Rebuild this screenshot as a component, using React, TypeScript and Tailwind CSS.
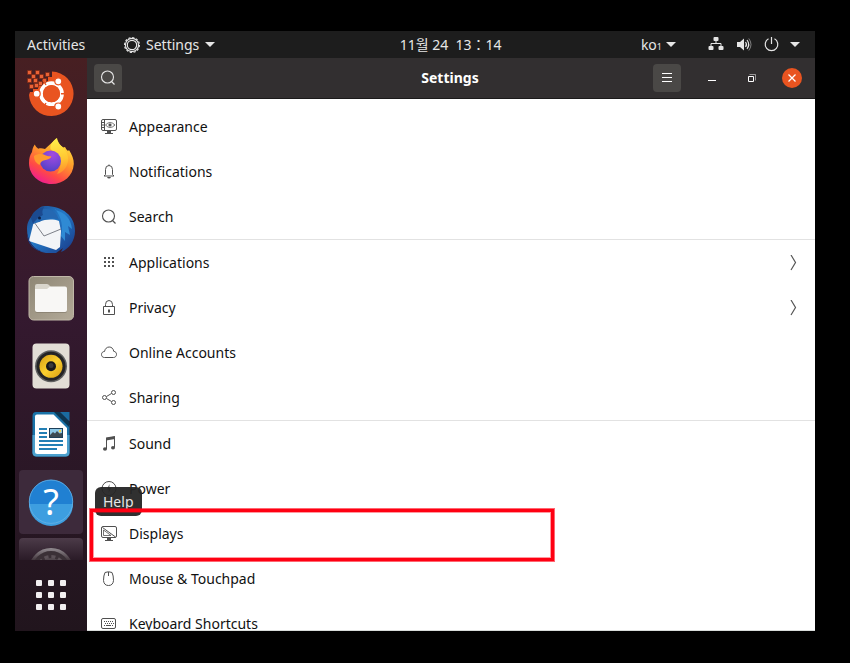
import type { ReactNode } from "react";

const sections = [
    [
        { label: 'Appearance', icon: <AppearanceIcon /> },
        { label: 'Notifications', icon: <BellIcon /> },
        { label: 'Search', icon: <SearchIcon /> },
    ],
    [
        { label: 'Applications', icon: <AppsIcon />, arrow: true },
        { label: 'Privacy', icon: <LockIcon />, arrow: true },
        { label: 'Online Accounts', icon: <CloudIcon /> },
        { label: 'Sharing', icon: <ShareIcon /> },
    ],
    [
        { label: 'Sound', icon: <MusicIcon /> },
        { label: 'Power', icon: <PowerRowIcon /> },
        { label: 'Displays', icon: <DisplayIcon />, marked: true },
        { label: 'Mouse & Touchpad', icon: <MouseIcon /> },
        { label: 'Keyboard Shortcuts', icon: <KeyboardIcon /> },
    ],
] as { label: string; icon: ReactNode; arrow?: boolean; marked?: boolean }[][];

const dockApps = [
    { label: 'Install Ubuntu', icon: <UbuntuLogo /> },
    { label: 'Firefox', icon: <FirefoxLogo /> },
    { label: 'Thunderbird', icon: <ThunderbirdLogo /> },
    { label: 'Files', icon: <FilesLogo /> },
    { label: 'Rhythmbox', icon: <RhythmboxLogo /> },
    { label: 'LibreOffice Writer', icon: <WriterLogo /> },
];

export default function App() {
    return (
        <div className="h-screen bg-black pt-[31px] pr-[35px] pb-8 pl-[15px] font-['Noto_Sans','Noto_Sans_CJK_KR',sans-serif] text-sm">
            <div className="flex h-full flex-col">
                <TopBar />
                <div className="flex min-h-0 flex-1">
                    <Dock />
                    <main className="flex min-w-0 flex-1 flex-col">
                        <HeaderBar />
                        <SettingsList />
                    </main>
                </div>
            </div>
        </div>
    );
}

function TopBar() {
    return (
        <header className="flex h-[27px] shrink-0 items-center bg-[#1d1d1d] pr-[15px] text-[#e6e6e6]">
            <div className="flex basis-[49%] items-center pl-3">
                <button className="w-[97px] text-left">Activities</button>
                <button className="flex items-center">
                    <GearIcon />
                    <span className="ml-1.5 mr-1.5">Settings</span>
                    <Caret />
                </button>
            </div>
            <button className="whitespace-pre">11월 24  13：14</button>
            <div className="ml-auto flex items-center">
                <button className="mr-8 flex items-center gap-1">
                    <span>ko<span className="text-[9px]">1</span></span>
                    <Caret />
                </button>
                <button className="flex items-center" aria-label="System menu">
                    <NetworkIcon />
                    <span className="mx-3"><VolumeIcon /></span>
                    <PowerIcon />
                    <span className="ml-2.5"><Caret /></span>
                </button>
            </div>
        </header>
    );
}

function HeaderBar() {
    return (
        <div className="grid h-[41px] shrink-0 grid-cols-[1fr_auto_1fr] items-center border-b border-[#1b1a1a] bg-[#322f30] pr-[13px] pl-[7px] text-white">
            <button aria-label="Search" className="flex size-7 items-center justify-center rounded-sm bg-[#4a4846] text-[#e6e6e6]">
                <SearchIcon />
            </button>
            <h1 className="pl-1 font-bold">Settings</h1>
            <div className="flex items-center justify-end">
                <button aria-label="Menu" className="mr-[21px] flex size-7 items-center justify-center rounded-sm bg-[#4a4846]">
                    <svg width="16" height="16" viewBox="0 0 16 16" stroke="currentColor">
                        <path d="M3 3.5h10M3 7.5h10M3 11.5h10" />
                    </svg>
                </button>
                <button aria-label="Minimize" className="mr-[22px]">
                    <svg width="20" height="20" viewBox="0 0 20 20" stroke="currentColor">
                        <path d="M6 12.5h8" />
                    </svg>
                </button>
                <button aria-label="Restore" className="mr-[22px]">
                    <svg width="16" height="16" viewBox="0 0 16 16" fill="none" stroke="currentColor">
                        <path d="M5.5 4.5h6v6" opacity=".5" />
                        <path d="M4.5 6.5h5v5h-5z" />
                    </svg>
                </button>
                <button aria-label="Close" className="flex size-5 items-center justify-center rounded-full bg-[#e95420]">
                    <svg width="10" height="10" viewBox="0 0 10 10" stroke="currentColor" strokeWidth="1.3">
                        <path d="M1.5 1.5l7 7M8.5 1.5l-7 7" />
                    </svg>
                </button>
            </div>
        </div>
    );
}

function SettingsList() {
    return (
        <nav className="min-h-0 flex-1 overflow-hidden border-b border-[#d8dcda] bg-white pt-[5px] text-[#111]">
            {
                sections.map((rows, index) =>
                    <ul key={index} className="border-b border-[#e2e2e2] last:border-b-0">
                        {
                            rows.map((row) =>
                                <li key={row.label} className="relative">
                                    <a href="#" className="flex h-[45px] items-center px-[14px]">
                                        <span className="text-[#505050]">{row.icon}</span>
                                        <span className="ml-3 flex-1">{row.label}</span>
                                        {row.arrow && <Chevron />}
                                    </a>
                                    {row.marked && <MarkFrame />}
                                </li>
                            )
                        }
                    </ul>
                )
            }
        </nav>
    );
}

function MarkFrame() {
    return (
        <div className="pointer-events-none absolute -top-0.5 left-[3px] z-20 h-[52px] w-[464px] border-[3px] border-[#ff0012] shadow-[0_0_0_1px_#ff001299,inset_0_0_0_1px_#ff001266]" />
    );
}

function Dock() {
    return (
        <aside className="flex w-[72px] shrink-0 flex-col bg-linear-to-b from-[#471f22] via-[#34192f] via-45% to-[#21151d]">
            <div className="flex min-h-0 flex-1 flex-col items-center gap-1 pt-1">
                {
                    dockApps.map((app) =>
                        <button key={app.label} aria-label={app.label} className="size-16 shrink-0">{app.icon}</button>
                    )
                }
                <div className="relative size-16 shrink-0">
                    <button aria-label="Help" className="size-16 rounded-sm bg-[#3d2a3b]">
                        <HelpLogo />
                    </button>
                    <span role="tooltip" className="absolute top-[17px] left-[76px] z-10 rounded-md bg-[#252525]/95 px-2 py-1 leading-[21px] text-[#e6e6e6]">Help</span>
                </div>
                <button aria-label="Settings" className="flex min-h-0 w-16 flex-1 items-start overflow-hidden rounded-t-sm bg-linear-to-b from-[#4c3b49] to-[#2a1b27]">
                    <SettingsLogo />
                </button>
            </div>
            <button aria-label="Show Applications" className="flex h-[71px] shrink-0 items-center justify-center pb-0.5">
                <span className="grid grid-cols-3 gap-1.5">
                    {
                        [0, 1, 2, 3, 4, 5, 6, 7, 8].map((dot) =>
                            <span key={dot} className="size-1.5 rounded-[1px] bg-[#f2eff0]" />
                        )
                    }
                </span>
            </button>
        </aside>
    );
}

/* ---- dock logos ---- */

function Logo(props: { children: ReactNode }) {
    return <svg width="64" height="64" viewBox="0 0 64 64" className="shrink-0">{props.children}</svg>;
}

function UbuntuLogo() {
    const pixels = [[9, 9], [17, 9], [13, 13], [21, 13], [27, 11], [9, 17], [15, 17], [20, 20], [24, 17], [11, 23], [16, 22]];
    return (
        <Logo>
            <path d="M33 9.500A22.300 22.300 0 1 1 10 33l1-3h3v-3h5v-4h5v-4h5v-4h4z" fill="#e95420" />
            {pixels.map(([x, y]) =>
                <rect key={x + '-' + y} x={x - 0.5} y={y - 0.5} width="4" height="4" fill="#ea6236" stroke="#7a2816" strokeWidth=".7" />
            )}
            <circle cx="32.500" cy="31.700" r="10.500" fill="none" stroke="#fff" strokeWidth="3.800" />
            <path d="M42 31.700h5M27 23l-3-5M27 41l-3 5" stroke="#e95420" strokeWidth="1.400" />
            <circle cx="32.500" cy="31.700" r="8.600" fill="#e95420" />
            <g fill="#fff" stroke="#e95420" strokeWidth="1.200">
                <circle cx="39.300" cy="19.300" r="3.500" />
                <circle cx="17.700" cy="31.700" r="3.500" />
                <circle cx="39.300" cy="44.500" r="3.500" />
            </g>
        </Logo>
    );
}

function FirefoxLogo() {
    return (
        <Logo>
            <defs>
                <linearGradient id="ffBody" x1=".85" y1=".1" x2=".35" y2="1">
                    <stop offset="0" stopColor="#ffe63c" />
                    <stop offset=".4" stopColor="#ff9a2b" />
                    <stop offset=".75" stopColor="#ff4a45" />
                    <stop offset="1" stopColor="#f0208c" />
                </linearGradient>
                <linearGradient id="ffFlame" x1=".5" y1="0" x2=".6" y2="1">
                    <stop offset="0" stopColor="#fff04a" />
                    <stop offset=".6" stopColor="#ffc531" />
                    <stop offset="1" stopColor="#ff8a2c" />
                </linearGradient>
                <radialGradient id="ffGlobe" cx=".6" cy=".2" r=".9">
                    <stop offset="0" stopColor="#a44be0" />
                    <stop offset=".6" stopColor="#6f45d2" />
                    <stop offset="1" stopColor="#4a3fbc" />
                </radialGradient>
            </defs>
            <path d="M15.700 14.500c1 2 2 3 3.500 4.200 2.200-.6 4.500-.4 6.800.3C29 16 33 13 37.500 8c1 5 3.500 7 6.500 9.500l2-.5c1 2 2 3 3 4l1-1c3 5 5 9 4.800 14C54 46 45 54 32.500 54S10 45 10 33c0-5 1-8 3-11 .3-3 1.200-5 2.700-7.500z" fill="url(#ffBody)" />
            <path d="M38 8c1 5 3.500 7 6 9.500C49 23 50.500 29 48 35c-2 5-6 8-10 9 3-5 5-10 2-17-2-3-6-6-8.500-8C31 14 34 11 38 8z" fill="url(#ffFlame)" />
            <circle cx="31.500" cy="31" r="10.500" fill="url(#ffGlobe)" />
            <path d="M15 26c4-2.500 8-2.500 12-.5 2 1 4 .5 5.500 1-1 2.500-4 3-7 3.800-2.500.7-4 1.700-5 4.700-3-2-5.500-4-5.500-9z" fill="#ff9b2e" />
        </Logo>
    );
}

function ThunderbirdLogo() {
    return (
        <Logo>
            <defs>
                <linearGradient id="tbBody" x1="0" y1="0" x2="1" y2="1">
                    <stop offset="0" stopColor="#1b4688" />
                    <stop offset=".45" stopColor="#2478c6" />
                    <stop offset="1" stopColor="#193785" />
                </linearGradient>
            </defs>
            <path d="M26 8C44 8 56 18 56 33c0 10-6 18-14 21l2-4-7 5H27C15 53 8 43 8 31c0-7 3-12 8-16 3-4 5-7 10-7z" fill="url(#tbBody)" />
            <path d="M36 12c10 2 16 9 17 19l-4-3 2 9-5-3v9l-4-5c2-10 1-18-6-27z" fill="#2f8ad4" />
            <path d="M15 23l5 1c7-3 14-3 20-1l2 10-1 16-4 3-27-9z" fill="#f3f4f7" />
            <path d="M15 24l10 14 17-7" fill="none" stroke="#7d8089" />
            <path d="M10 42c3 7 8 10 15 12-10-1-17-8-17-18z" fill="#1b3c83" />
            <path d="M14 26c0-8 5-15 13-15 6 0 11 4 13 11-7-3-15-2-20 2z" fill="#2568b2" />
            <path d="M12 20c1-5 6-10 13-11-2 3-2 6-1 8-4 2-8 5-10 9z" fill="#1b4a90" />
            <circle cx="20.500" cy="20" r="1.500" fill="#0c2046" />
        </Logo>
    );
}

function FilesLogo() {
    return (
        <Logo>
            <defs>
                <linearGradient id="filesBg" x1="0" y1="0" x2="1" y2="1">
                    <stop offset="0" stopColor="#8e8675" />
                    <stop offset="1" stopColor="#b3aa98" />
                </linearGradient>
            </defs>
            <rect x="10" y="10.500" width="44.500" height="43.500" rx="4.500" fill="url(#filesBg)" stroke="#c0b8a8" />
            <path d="M16 20q0-2 2-2h10q1.500 0 2.500 1.500l2 2.500H40v14H16z" fill="#d9d5cc" />
            <path d="M16 24h12l3-2.500h15q2 0 2 2V45q0 2-2 2H18q-2 0-2-2z" fill="#7f7767" opacity=".6" />
            <path d="M16 23h12l3-2.500h15q2 0 2 2V44q0 2-2 2H18q-2 0-2-2z" fill="#f8f7f5" />
        </Logo>
    );
}

function RhythmboxLogo() {
    return (
        <Logo>
            <defs>
                <linearGradient id="rbCone" x1="0" y1="0" x2="1" y2="1">
                    <stop offset="0" stopColor="#d69d12" />
                    <stop offset=".5" stopColor="#fbd02f" />
                    <stop offset="1" stopColor="#d69d12" />
                </linearGradient>
            </defs>
            <rect x="13.500" y="9.500" width="37" height="45" rx="4" fill="#e2ded6" />
            <circle cx="32" cy="32.300" r="16" fill="#5f6060" />
            <circle cx="32" cy="32.300" r="14.500" fill="#242426" />
            <circle cx="32" cy="32.300" r="11.500" fill="url(#rbCone)" />
            <circle cx="32" cy="32.300" r="5" fill="#19191b" />
            <circle cx="32" cy="31.500" r="2.500" fill="#3a3a3d" />
        </Logo>
    );
}

function WriterLogo() {
    return (
        <Logo>
            <path d="M17 10h20l13.500 13.500V50.500q0 4-4 4H17.500q-4 0-4-4V14q0-4 3.500-4z" fill="#1a73a8" />
            <path d="M13.500 33h37v17.500q0 4-4 4h-29q-4 0-4-4z" fill="#4ba0cd" />
            <path d="M18 12.500h16.500L48 26v23.500q0 2.500-2.500 2.500h-27Q16 52 16 49.500V14.500q0-2 2-2z" fill="#fff" />
            <path d="M35 10l15.500 15.500V20l-9.500-10z" fill="#0d3550" />
            <path d="M41 10h9.500v9.500z" fill="#1a6ba0" />
            <path d="M20 27h8M20 31h8M20 35h8M20 39h24M20 43h24M20 47h18" stroke="#237fb5" strokeWidth="1.800" />
            <rect x="30.500" y="26.500" width="13" height="9" fill="#8cc8e8" stroke="#1d3f59" />
            <path d="M31 35v-2l3-3 2 1.500 2-2.500 2.500 2.500 2.500-.5v4z" fill="#3c4a53" />
            <circle cx="41" cy="29" r="1.200" fill="#f5d34b" />
        </Logo>
    );
}

function HelpLogo() {
    return (
        <Logo>
            <circle cx="32" cy="31.700" r="22" fill="#2080d2" />
            <path d="M10 34a22 22 0 0 0 44 0z" fill="#3d9ee0" />
            <circle cx="32" cy="31.700" r="21.700" fill="none" stroke="#67b2e6" strokeWidth=".8" />
            <text x="32" y="45" textAnchor="middle" fontSize="36" fill="#fff">?</text>
        </Logo>
    );
}

function SettingsLogo() {
    return (
        <Logo>
            <defs>
                <linearGradient id="setFade" x1="0" y1="9" x2="0" y2="24" gradientUnits="userSpaceOnUse">
                    <stop offset="0" stopColor="#9a9499" />
                    <stop offset="1" stopColor="#35282f" />
                </linearGradient>
            </defs>
            <circle cx="32" cy="32" r="22" fill="#3a3036" />
            <circle cx="32" cy="32" r="20.500" fill="none" stroke="url(#setFade)" strokeWidth="3" />
            <circle cx="32" cy="32" r="13" fill="none" stroke="#5b5157" strokeWidth="4" strokeDasharray="4 2.800" />
            <circle cx="32" cy="32" r="10.500" fill="none" stroke="#51474d" strokeWidth="3" />
        </Logo>
    );
}

/* ---- top bar icons ---- */

function Caret() {
    return (
        <svg width="10" height="5" viewBox="0 0 10 5" fill="currentColor">
            <path d="M0 0h10L5 5z" />
        </svg>
    );
}

function GearIcon() {
    return (
        <svg width="16" height="16" viewBox="0 0 16 16" fill="none" stroke="currentColor">
            <circle cx="8" cy="8" r="4.700" strokeWidth="1.200" />
            <circle cx="8" cy="8" r="6.600" strokeWidth="1.100" />
            <circle cx="8" cy="8" r="7.400" strokeWidth="1.200" strokeDasharray="2.200 1.670" />
        </svg>
    );
}

function NetworkIcon() {
    return (
        <svg width="16" height="16" viewBox="0 0 16 16" fill="currentColor">
            <rect x="5.500" y="0" width="5" height="4" rx="1" />
            <rect x="0.500" y="9" width="5" height="4" rx="1" />
            <rect x="10.500" y="9" width="5" height="4" rx="1" />
            <path d="M3 9.500v-3h10v3M8 3v3.500" fill="none" stroke="currentColor" />
        </svg>
    );
}

function VolumeIcon() {
    return (
        <svg width="16" height="16" viewBox="0 0 16 16" fill="none" stroke="currentColor">
            <path d="M1 5h3l4-3.500v12L4 10H1z" fill="currentColor" stroke="none" />
            <path d="M9.500 5q2 2.500 0 5" strokeWidth="1.200" />
            <path d="M11 3q3.500 4.500 0 9" strokeWidth="1.100" />
            <path d="M12.800 1.500q4.400 6 0 12" opacity=".5" />
        </svg>
    );
}

function PowerIcon() {
    return (
        <svg width="16" height="16" viewBox="0 0 16 16" fill="none" stroke="currentColor" strokeWidth="1.200">
            <path d="M4.500 1.800a6.300 6.300 0 1 0 6 0M7.500 0v7" />
        </svg>
    );
}

/* ---- list icons ---- */

function RowIcon(props: { children: ReactNode }) {
    return (
        <svg width="16" height="16" viewBox="0 0 16 16" fill="none" stroke="currentColor">
            {props.children}
        </svg>
    );
}

function Chevron() {
    return (
        <svg width="16" height="16" viewBox="0 0 16 16" fill="none" stroke="#555" strokeWidth="1.200">
            <path d="M6 0l4.500 7.500L6 15" />
        </svg>
    );
}

function AppearanceIcon() {
    return (
        <RowIcon>
            <rect x=".5" y=".5" width="15" height="11" rx="1.500" />
            <path d="M3.500 1v10M.5 3.500h3M.5 6h3M.5 8.500h3" />
            <path d="M4.500 6q4.500-5 9.500 0-5 5-9.500 0z" strokeWidth=".8" />
            <circle cx="9" cy="6" r="1.300" fill="currentColor" strokeWidth=".5" />
            <path d="M6 12h4v2h2v1H4v-1h2z" fill="currentColor" stroke="none" />
        </RowIcon>
    );
}

function BellIcon() {
    return (
        <RowIcon>
            <path d="M4.500 10.500V5.500q0-4 3.500-4t3.500 4v5l1.500 1.500H3zM8 .5v1" />
            <path d="M6 13h4q-.5 1.500-2 1.500T6 13z" fill="currentColor" stroke="none" />
        </RowIcon>
    );
}

function SearchIcon() {
    return (
        <RowIcon>
            <circle cx="7.500" cy="7" r="6" strokeWidth="1.100" />
            <path d="M11.500 11.500l3 3" strokeWidth="1.300" />
        </RowIcon>
    );
}

function AppsIcon() {
    return (
        <RowIcon>
            <path d="M3 3h11M3 7h11M3 11h11" strokeWidth="2" strokeDasharray="2 2" />
        </RowIcon>
    );
}

function LockIcon() {
    return (
        <RowIcon>
            <path d="M2.500 6.500h11v8h-11zM4.500 6.500V4.500q0-4 3.500-4t3.500 4v2" />
            <path d="M7 9.500h2v3H7z" fill="currentColor" stroke="none" />
        </RowIcon>
    );
}

function CloudIcon() {
    return (
        <RowIcon>
            <path d="M3.500 12.500C1.500 12.500.5 11.200.5 9.500S1.700 6.500 3.500 6.500C4 3.800 5.800 2 8.200 2s4.200 1.700 4.500 4.300c1.800.2 2.800 1.400 2.800 3.100s-1.200 3.100-3 3.100z" />
        </RowIcon>
    );
}

function ShareIcon() {
    return (
        <RowIcon>
            <circle cx="3.500" cy="7.500" r="2" />
            <circle cx="12.500" cy="2.500" r="2" />
            <circle cx="12.500" cy="12.500" r="2" />
            <path d="M5.500 6.500l5-3M5.500 8.500l5 3" />
        </RowIcon>
    );
}

function MusicIcon() {
    return (
        <RowIcon>
            <path d="M5.500 13V2.500l8-1.500v10.500" />
            <path d="M5 1.500L14 0v3L5 4.500z" fill="currentColor" stroke="none" />
            <ellipse cx="4" cy="13" rx="2" ry="1.800" fill="currentColor" stroke="none" />
            <ellipse cx="12" cy="11.800" rx="2" ry="1.800" fill="currentColor" stroke="none" />
        </RowIcon>
    );
}

function PowerRowIcon() {
    return (
        <RowIcon>
            <circle cx="8" cy="7.500" r="7" />
            <path d="M8.500 3L6 8.500h1.800L7.500 12l2.500-5H8.300z" fill="currentColor" stroke="none" />
        </RowIcon>
    );
}

function DisplayIcon() {
    return (
        <RowIcon>
            <rect x=".5" y=".5" width="15" height="11" rx="1.500" />
            <path d="M1.500 1.500l13 9.500" />
            <path d="M2.500 4v5.500h7.500z" strokeWidth=".8" />
            <path d="M6 12h4v2h2v1H4v-1h2z" fill="currentColor" stroke="none" />
        </RowIcon>
    );
}

function MouseIcon() {
    return (
        <RowIcon>
            <path d="M4 1.500Q7.500 0 11 1.500q1.500 3 1.500 8-.5 5-5 5t-5-5q0-5 1.500-8zM7.500 1v4" />
        </RowIcon>
    );
}

function KeyboardIcon() {
    return (
        <RowIcon>
            <rect x=".5" y="2.500" width="14" height="10" rx="1.500" />
            <path d="M3 5.500h10M4 7.500h9" strokeDasharray="1 1" />
            <path d="M3 9.500h1M5 9.500h5M11 9.500h1" />
        </RowIcon>
    );
}
